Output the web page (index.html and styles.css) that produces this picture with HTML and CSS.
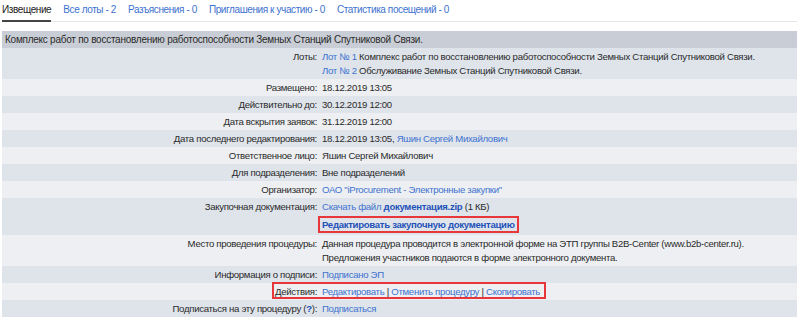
FILE: index.html
```html
<!DOCTYPE html>
<html>
<head>
    <meta charset="utf-8">
    <title>Извещение</title>
    <link rel="stylesheet" href="styles.css">
</head>
<body>
    <ul class="tabs">
        <li class="tab active">Извещение</li>
        <li class="tab"><a href="#">Все лоты - 2</a></li>
        <li class="tab"><a href="#">Разъяснения - 0</a></li>
        <li class="tab"><a href="#">Приглашения к участию - 0</a></li>
        <li class="tab"><a href="#">Статистика посещений - 0</a></li>
    </ul>

    <div class="notice">
        <table class="info">
            <colgroup>
                <col class="col-label" />
                <col />
            </colgroup>
            <thead>
                <tr>
                    <th colspan="2">Комплекс работ по восстановлению работоспособности Земных Станций Спутниковой Связи.</th>
                </tr>
            </thead>
            <tbody>
                <tr>
                    <td class="label">Лоты:</td>
                    <td><a href="#">Лот № 1</a> Комплекс работ по восстановлению работоспособности Земных Станций Спутниковой Связи.<br/><a href="#">Лот № 2</a> Обслуживание Земных Станций Спутниковой Связи.</td>
                </tr>
                <tr>
                    <td class="label">Размещено:</td>
                    <td>18.12.2019 13:05</td>
                </tr>
                <tr>
                    <td class="label">Действительно до:</td>
                    <td>30.12.2019 12:00</td>
                </tr>
                <tr>
                    <td class="label">Дата вскрытия заявок:</td>
                    <td>31.12.2019 12:00</td>
                </tr>
                <tr>
                    <td class="label">Дата последнего редактирования:</td>
                    <td>18.12.2019 13:05, <a href="#">Яшин Сергей Михайлович</a></td>
                </tr>
                <tr>
                    <td class="label">Ответственное лицо:</td>
                    <td>Яшин Сергей Михайлович</td>
                </tr>
                <tr>
                    <td class="label">Для подразделения:</td>
                    <td>Вне подразделений</td>
                </tr>
                <tr>
                    <td class="label">Организатор:</td>
                    <td><a href="#">ОАО "iProcurement - Электронные закупки"</a></td>
                </tr>
                <tr>
                    <td class="label">Закупочная документация:</td>
                    <td>
                        <a href="#">Скачать файл <b class="strong-link">документация.zip</b></a> (1 КБ)
                        <div class="edit-doc"><a href="#" class="strong-link marked">Редактировать закупочную документацию</a></div>
                    </td>
                </tr>
                <tr>
                    <td class="label">Место проведения процедуры:</td>
                    <td>Данная процедура проводится в электронной форме на ЭТП группы B2B-Center (www.b2b-center.ru).<br/>Предложения участников подаются в форме электронного документа.</td>
                </tr>
                <tr>
                    <td class="label">Информация о подписи:</td>
                    <td><a href="#">Подписано ЭП</a></td>
                </tr>
                <tr class="actions-row">
                    <td class="label"><span class="actions-box"></span>Действия:</td>
                    <td><a href="#">Редактировать</a> | <a href="#">Отменить процедуру</a> | <a href="#">Скопировать</a></td>
                </tr>
                <tr>
                    <td class="label">Подписаться на эту процедуру (<a href="#" class="strong-link">?</a>):</td>
                    <td><a href="#">Подписаться</a></td>
                </tr>
            </tbody>
        </table>
    </div>
</body>
</html>
```

FILE: styles.css
```css
body {
    margin: 0;
    padding: 0 3px 0 2px;
    font-family: "Liberation Sans", Arial, sans-serif;
    font-size: 9.6px;
    letter-spacing: -0.3px;
    color: #2a2a2a;
    background: #fff;
}
a {
    color: #3d72cf;
    text-decoration: none;
}

/* вкладки */
.tabs {
    display: flex;
    gap: 12px;
    margin: 0;
    padding: 0;
    list-style: none;
    font-size: 10px;
    letter-spacing: -0.4px;
    border-bottom: 1px solid #e6e6e6;
}
.tab {
    padding: 4px 0 4px;
    line-height: 12px;
}
.tab.active {
    color: #222;
    border-bottom: 2px solid #444;
    margin-bottom: -1px;
}

/* таблица извещения */
.notice {
    margin-top: 9px;
}
table.info {
    width: 100%;
    border-collapse: collapse;
}
.col-label {
    width: 318px;
}
table.info th {
    text-align: left;
    font-weight: normal;
    font-size: 10px;
    letter-spacing: -0.25px;
    background: #c9ced6;
    padding: 2px 3px 1px;
    line-height: 14px;
}
table.info td {
    padding: 2px 2px 1px;
    line-height: 14px;
    vertical-align: top;
}
table.info td.label {
    text-align: right;
    padding-right: 3px;
}
table.info tbody tr:nth-child(odd) {
    background: #dfe4eb;
}
table.info tbody tr:nth-child(even) {
    background: #edeff2;
}
.strong-link {
    color: #1f52b8;
    font-weight: bold;
}
.edit-doc {
    margin: 2px 0 1px -4px;
}
.marked {
    display: inline-block;
    padding: 0 2px;
    line-height: 13px;
    border: 2px solid #e8373a;
}

/* рамка вокруг строки действий */
.actions-row td.label {
    position: relative;
}
.actions-box {
    position: absolute;
    left: 270px;
    top: -1px;
    width: 270px;
    height: 13px;
    border: 2px solid #e8373a;
}
```
